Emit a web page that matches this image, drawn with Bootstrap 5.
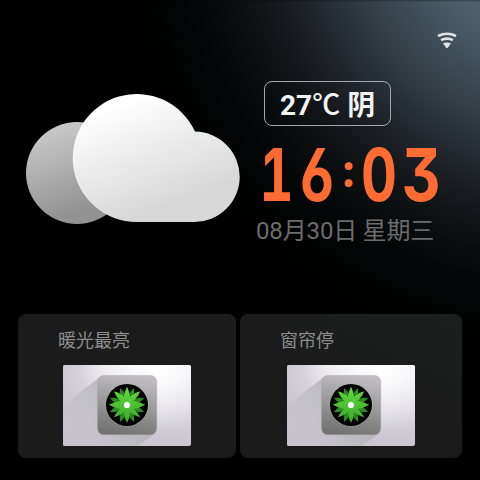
<!DOCTYPE html>
<html lang="zh-CN" data-bs-theme="dark">
<head>
<meta charset="utf-8">
<meta name="viewport" content="width=device-width, initial-scale=1">
<title>智能面板</title>
<link href="https://cdn.jsdelivr.net/npm/bootstrap@5.3.0/dist/css/bootstrap.min.css" rel="stylesheet">
<style>
body{width:480px;height:480px;overflow:hidden;background:#000;font-family:Roboto,"Noto Sans CJK SC",sans-serif}
.panel{width:480px;height:480px;background:
 linear-gradient(rgba(0,0,0,.3),transparent 2px),
 radial-gradient(circle at 560px -80px,#526470 100px,#4b5c67 135px,#3a464f 190px,#2d373e 226px,#22282f 256px,#1b1f24 280px,#111518 308px,#0b0e10 335px,#050607 370px,#020303 405px,#000 440px)}
.statusbar{height:81px;padding:32px 23px 0 0}
.statusbar svg,.weather-art svg,.clock svg,.thumb{display:block}
.hero{height:233px}
.weather-art{width:256px;padding:13px 0 0 26px}
.temp{width:127px;height:45px;margin-left:8px;border:1px solid #a5a7a8;border-radius:8px;font-size:28px;font-weight:700;line-height:43px;color:#f2f2f2;padding-left:15px}
.temp .han{font-family:"Noto Sans CJK SC",sans-serif}
.temp .unit{font-weight:500}
.clock{margin:17px 0 0 2px}
.clock svg{overflow:visible}
.clock text{font-family:Inter,sans-serif;font-weight:700;font-size:73px;fill:#ff6c33;font-feature-settings:"tnum","ss01","cv09","cv03"}
.clock .colon{font-size:46px}
.date{font-size:24px;line-height:30px;color:#6b6c6d;margin-top:9px;letter-spacing:-.12px;word-spacing:-.5px}
.scenes{padding:0 18px;gap:4px}
.scene{height:144px;border-radius:8px;background:#1b1b1b}
.scene-a{width:218px}
.scene-b{width:222px;background:linear-gradient(25deg,#1a1a1a 45%,#1d1f1e)}
.scene-name{font-size:18px;line-height:24px;color:#8c8c8c;padding:15px 0 0 40px}
.thumb{margin:12px 0 0 45px}
.scene-b .thumb{margin-left:47px}
</style>
</head>
<body>
<svg width="0" height="0" class="position-absolute" aria-hidden="true">
<defs>
<linearGradient id="wall" x1="0" y1="0" x2="0" y2="1"><stop offset="0" stop-color="#e8e6ec"/><stop offset="1" stop-color="#c8c5d0"/></linearGradient>
<radialGradient id="glow" gradientUnits="userSpaceOnUse" cx="0" cy="0" r="1" gradientTransform="translate(94 0) scale(76 68)"><stop offset="0" stop-color="#fff"/><stop offset=".3" stop-color="#fff" stop-opacity=".8"/><stop offset="1" stop-color="#fff" stop-opacity="0"/></radialGradient>
<linearGradient id="edge"><stop offset="0" stop-color="#c4c1cc" stop-opacity=".75"/><stop offset=".35" stop-color="#c4c1cc" stop-opacity="0"/></linearGradient>
<linearGradient id="shade" gradientUnits="userSpaceOnUse" x1="80" y1="20" x2="10" y2="70"><stop offset="0" stop-color="#b0afb2"/><stop offset=".6" stop-color="#bfbdc4" stop-opacity=".85"/><stop offset="1" stop-color="#c5c2cc" stop-opacity=".4"/></linearGradient>
<linearGradient id="plate" x1=".6" y1="0" x2=".4" y2="1"><stop offset="0" stop-color="#c0bec0"/><stop offset=".5" stop-color="#9a999a"/><stop offset="1" stop-color="#737273"/></linearGradient>
<linearGradient id="leaf" gradientUnits="userSpaceOnUse" x1="0" y1="-18" x2="0" y2="18"><stop offset="0" stop-color="#5ddd3c"/><stop offset="1" stop-color="#3da52c"/></linearGradient>
<symbol id="switch" viewBox="0 0 128 81">
<clipPath id="frame"><rect width="128" height="81" rx="2"/></clipPath>
<g clip-path="url(#frame)">
<rect width="128" height="81" fill="url(#wall)"/><rect width="128" height="81" fill="url(#edge)"/><rect width="128" height="81" fill="url(#glow)"/>
<path d="M0 40L37 12L93 68L75 81H0Z" fill="url(#shade)"/>
<rect x="34.4" y="10.4" width="59.4" height="59.4" rx="6.5" fill="url(#plate)" stroke="#aaa" stroke-opacity=".55" stroke-width=".8"/>
<circle cx="64.2" cy="40" r="21.6" fill="#b5b4b5" fill-opacity=".6"/><circle cx="64" cy="40" r="21" fill="#000"/>
<g transform="translate(64 40)">
<g fill="#2a8c20"><path id="pb" d="M0 0C-3.400-6-3.400-12 0-18.500C3.400-12 3.400-6 0 0Z" transform="rotate(22.5)"/><use href="#pb" transform="rotate(45)"/><use href="#pb" transform="rotate(90)"/><use href="#pb" transform="rotate(135)"/><use href="#pb" transform="rotate(180)"/><use href="#pb" transform="rotate(225)"/><use href="#pb" transform="rotate(270)"/><use href="#pb" transform="rotate(315)"/></g>
<path fill="url(#leaf)" d="M0-18.500Q2.600-13 3-8Q8-13 13-13.500Q11.500-9 6.500-4Q12-3.500 18.200-.2Q12 3.500 6.500 4Q11 7 13 12.500Q7 11 3 7Q3 13 0 18Q-3 13-3 7Q-7 11-13 12.500Q-11 7-6.500 4Q-12 3.500-18.200-.2Q-12-3.500-6.500-4Q-11.500-9-13-13.500Q-8-13-3-8Q-2.600-13 0-18.500Z"/>
<circle r="3.1" fill="#fff"/></g>
</g></symbol>
</defs></svg>
<main class="panel d-flex flex-column">
<header class="statusbar d-flex justify-content-end">
<svg width="20" height="17" viewBox="0 0 20 17"><g fill="none" stroke="#dfe1e3" stroke-width="2.6"><path d="M1 4Q10-.6 19 4"/><path d="M4 8.100Q10 5.200 16 8.100"/></g><path d="M6 11.300Q10 9.500 14 11.300L10.800 15.700Q10 16.500 9.200 15.700Z" fill="#e4e5e6"/></svg>
</header>
<section class="hero d-flex">
<div class="weather-art"><svg width="214" height="131" viewBox="0 0 214 131"><defs>
<linearGradient id="back" x1=".3" y1="0" x2=".65" y2="1"><stop offset="0" stop-color="#cbcbcb"/><stop offset=".85" stop-color="#929292"/></linearGradient>
<linearGradient id="front" gradientUnits="userSpaceOnUse" x1="90" y1="10" x2="130" y2="117"><stop offset="0" stop-color="#fff"/><stop offset="1" stop-color="#d7d7d7"/></linearGradient></defs>
<circle cx="51" cy="79" r="51" fill="url(#back)"/>
<path d="M110.500 128A64 64 0 1 1 169 37.600A45.200 45.200 0 0 1 168 128Z" fill="url(#front)"/></svg></div>
<div>
<div class="temp text-nowrap">27<span class="han unit">℃</span> <span class="han">阴</span></div>
<div class="clock"><svg width="190" height="64" viewBox="0 0 190 64">
<text x="1.500" y="58" textLength="34" lengthAdjust="spacingAndGlyphs">1</text>
<text x="41" y="58" textLength="36" lengthAdjust="spacingAndGlyphs">6</text>
<text class="colon" x="90.500" y="44" text-anchor="middle">:</text>
<text x="103" y="58" textLength="36" lengthAdjust="spacingAndGlyphs">0</text>
<text x="144" y="58" textLength="39" lengthAdjust="spacingAndGlyphs">3</text>
</svg></div>
<div class="date text-nowrap">08月30日 星期三</div>
</div>
</section>
<section class="scenes d-flex">
<article class="scene scene-a"><div class="scene-name">暖光最亮</div><svg class="thumb" width="128" height="81"><use href="#switch"/></svg></article>
<article class="scene scene-b"><div class="scene-name">窗帘停</div><svg class="thumb" width="128" height="81"><use href="#switch"/></svg></article>
</section>
</main>
<script src="https://cdn.jsdelivr.net/npm/bootstrap@5.3.0/dist/js/bootstrap.bundle.min.js"></script>
</body>
</html>
